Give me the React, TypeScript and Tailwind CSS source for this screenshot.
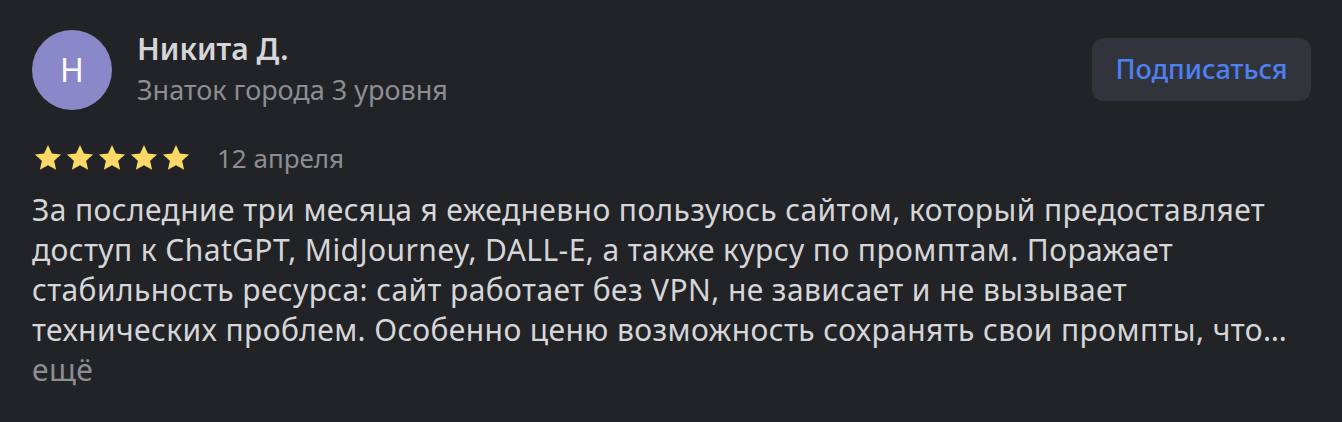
import React from 'react';

const lines = [
  'За последние три месяца я ежедневно пользуюсь сайтом, который предоставляет',
  'доступ к ChatGPT, MidJourney, DALL-E, а также курсу по промптам. Поражает',
  'стабильность ресурса: сайт работает без VPN, не зависает и не вызывает',
  'технических проблем. Особенно ценю возможность сохранять свои промпты, что…',
];

const Star: React.FC = () => (
  <svg viewBox="0 0 24 24" className="w-[32px] h-[32px]">
    <path
      d="M12 2.2l2.9 6.4 6.9.7-5.2 4.7 1.5 6.9L12 17.4l-6.1 3.5 1.5-6.9-5.2-4.7 6.9-.7z"
      fill="#fcd865"
    />
  </svg>
);

const App: React.FC = () => {
  return (
    <div className="min-h-screen w-full bg-[#222327] font-['Noto_Sans','Liberation_Sans',sans-serif] text-[#d6d6d8] antialiased">
      <div className="pl-[32px] pr-[31px] pt-[28px]">
        {/* Author */}
        <div className="flex items-start justify-between">
          <div className="flex items-start gap-[25px]">
            <div className="mt-[2px] w-[80px] h-[80px] rounded-full bg-[#8a88c9] flex items-center justify-center text-[32px] text-white">
              Н
            </div>
            <div className="flex flex-col">
              <span className="mt-[1px] text-[30px] leading-[40px] font-semibold text-[#d6d6d8]">Никита Д.</span>
              <span className="mt-[1px] text-[27px] leading-[40px] text-[#8d8e92]">Знаток города 3 уровня</span>
            </div>
          </div>
          <button className="mt-[10px] h-[63px] w-[219px] rounded-[12px] bg-[#31343b] text-[27px] font-medium text-[#4f80f0]">
            Подписаться
          </button>
        </div>

        {/* Rating */}
        <div className="mt-[32px] flex h-[32px] items-center">
          <div className="flex items-center">
            <Star />
            <Star />
            <Star />
            <Star />
            <Star />
          </div>
          <span className="ml-[25px] text-[26px] leading-[32px] text-[#8d8e92]">12 апреля</span>
        </div>

        {/* Text */}
        <div className="mt-[16px] text-[30px] leading-[40px] tracking-[0.4px] text-[#d6d6d8]">
          {lines.map((l) => (
            <div key={l} className="whitespace-nowrap">{l}</div>
          ))}
          <div className="text-[#8d8e92]">ещё</div>
        </div>
      </div>
    </div>
  );
};

export default App;
